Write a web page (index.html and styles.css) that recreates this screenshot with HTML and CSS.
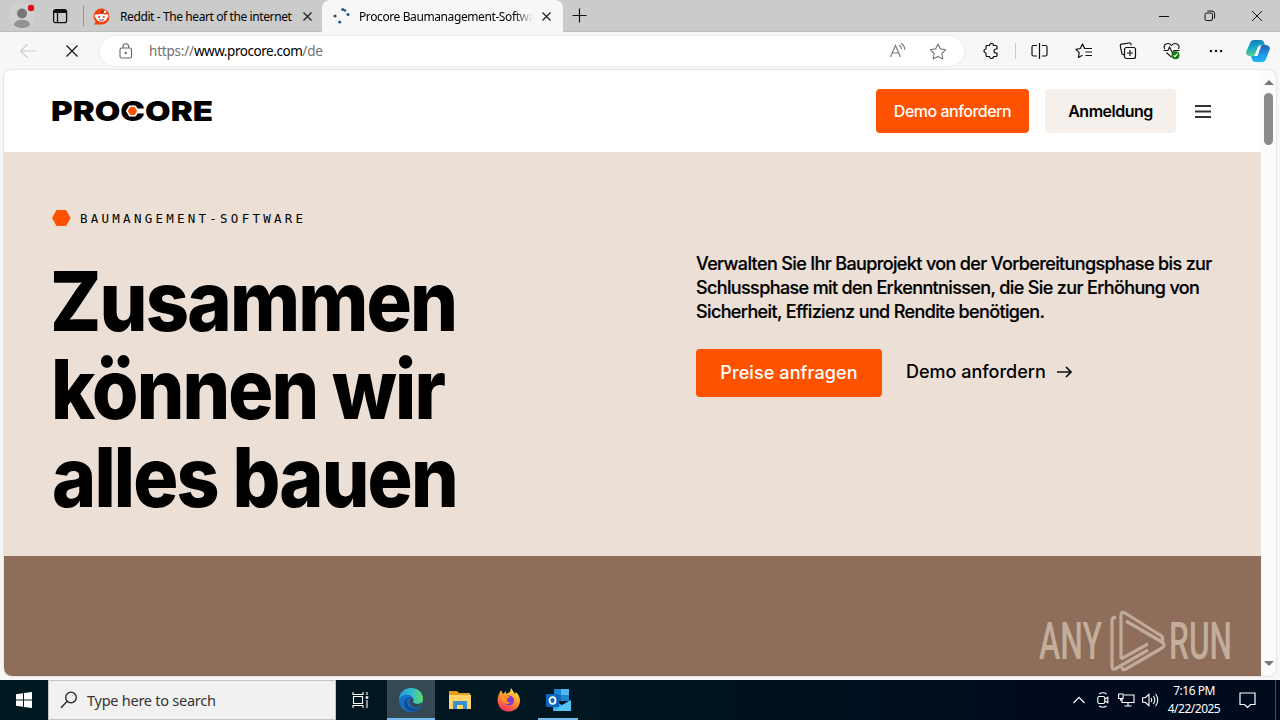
FILE: index.html
```html
<!DOCTYPE html>
<html lang="de">
<head>
<meta charset="utf-8">
<title>Procore Baumanagement-Software</title>
<link rel="stylesheet" href="styles.css">
</head>
<body>
<div class="desktop">
  <header class="tabbar">
    <svg class="profile" width="28" height="28" viewBox="0 0 28 28"><circle cx="14" cy="14" r="13" fill="#d0d0d0"/><circle cx="14" cy="11.5" r="5" fill="#777"/><path d="M6 23c0-7 16-7 16 0-3 4-13 4-16 0z" fill="#929292"/><circle cx="23" cy="6" r="3.2" fill="#e00b1c"/></svg>
    <svg class="workspaces" width="16" height="16" viewBox="0 0 16 16" fill="none" stroke="#111" stroke-width="1.3"><rect x="1.6" y="1.6" width="13" height="13" rx="2.2"/><path d="M5.5 5v9.5"/><path d="M1.8 3.5h12.6" stroke-width="3"/></svg>
    <i class="sep"></i>
    <div class="tab tab-idle">
      <svg width="17" height="17" viewBox="0 0 17 17"><path d="M8.5.5a8 8 0 1 1 0 16H.8l2-2.5A8 8 0 0 1 8.5.5z" fill="#f4420f"/><circle cx="3.3" cy="8" r="1.8" fill="#fff"/><circle cx="13.7" cy="8" r="1.8" fill="#fff"/><ellipse cx="8.5" cy="9.7" rx="5.5" ry="4" fill="#fff"/><circle cx="6.2" cy="9" r="1.1" fill="#f4420f"/><circle cx="10.8" cy="9" r="1.1" fill="#f4420f"/><path d="M6 11.6q2.5 1.5 5 0M8.5 6l.8-3 2.5.6" stroke="#222" fill="none" stroke-width=".8"/><circle cx="12" cy="3.8" r="1.2" fill="#fff"/></svg>
      <span class="tab-title t-reddit">Reddit - The heart of the internet</span>
      <svg class="x1" width="9" height="9" viewBox="0 0 9 9" stroke="#222" stroke-width="1.3"><path d="M.5.5l8 8M8.5.5l-8 8"/></svg>
    </div>
    <div class="tab tab-active">
      <svg width="18" height="18" viewBox="0 0 18 18" fill="#245b87"><circle cx="9.8" cy="2.5" r="1.6"/><circle cx="12" cy="3.5" r="1.3"/><circle cx="15" cy="7.5" r="1.6"/><circle cx="2" cy="9" r="1.6"/><circle cx="6.7" cy="15" r="1.6"/></svg>
      <span class="tab-title t-procore">Procore Baumanagement-Softwa</span>
      <svg class="x2" width="9" height="9" viewBox="0 0 9 9" stroke="#222" stroke-width="1.3"><path d="M.5.5l8 8M8.5.5l-8 8"/></svg>
    </div>
    <svg class="newtab" width="15" height="15" viewBox="0 0 15 15" stroke="#111" stroke-width="1.2"><path d="M7.5.5v14M.5 7.5h14"/></svg>
    <div class="winbtns">
      <svg width="10" height="12" viewBox="0 0 10 12"><path d="M0 6.5h10" stroke="#111"/></svg>
      <svg width="12" height="12" viewBox="0 0 12 12" fill="none" stroke="#111"><rect x="1" y="3" width="7.5" height="7.5" rx="1.5"/><path d="M3.3 1h4.7a2.6 2.6 0 0 1 2.6 2.6v5"/></svg>
      <svg width="12" height="12" viewBox="0 0 12 12" stroke="#111"><path d="M1 1l10 10M11 1l-10 10"/></svg>
    </div>
  </header>
  <div class="toolbar">
    <svg class="back" width="18" height="16" viewBox="0 0 18 16" fill="none" stroke="#cdcdcd" stroke-width="1.2"><path d="M17 8H1.5M8.5 1.2L1.5 8l7 6.8"/></svg>
    <svg class="stop" width="12" height="12" viewBox="0 0 12 12" stroke="#111" stroke-width="1.2"><path d="M.5.5l11 11M11.5.5l-11 11"/></svg>
    <div class="address">
      <svg width="14" height="16" viewBox="0 0 14 16" fill="none" stroke="#666" stroke-width="1.1"><rect x="1" y="5" width="11.5" height="10" rx="1.8"/><path d="M4 5V3.5a2.8 2.8 0 0 1 5.6 0V5"/><circle cx="6.8" cy="10" r=".6" fill="#666"/></svg>
      <div class="url"><span class="u1">https://</span><span class="host">www.procore.com</span><span class="u3">/de</span></div>
      <svg class="read" width="18" height="16" viewBox="0 0 18 16" fill="none" stroke="#777" stroke-width="1.1"><path d="M1.5 14L6.5 2.5l5 11.5M3.3 10h6.4M10 2.2q2.5 1.2 2.6 4M11.8.6q4 1.6 3.9 6.2"/></svg>
      <svg class="fav" width="18" height="17" viewBox="0 0 18 17" fill="none" stroke="#777" stroke-width="1.1" stroke-linejoin="round"><path d="M9 1l2.400 4.900 5.400.8-3.900 3.800.9 5.400L9 13.400l-4.800 2.500.9-5.400L1.200 6.700l5.400-.8z"/></svg>
    </div>
    <div class="tools">
      <svg width="16" height="16" viewBox="0 0 16 16" fill="none" stroke="#111" stroke-width="1.2" stroke-linejoin="round"><path d="M4 2.500h2.500a2 2 0 0 1 4 0h2.500q1 0 1 1V6h-1a2 2 0 0 0 0 4h1v2.500q0 1-1 1h-2.500a2 2 0 0 1-4 0H4q-1 0-1-1V10a2 2 0 0 1 0-4V3.500q0-1 1-1z"/></svg>
      <i class="tool-sep"></i>
      <svg class="split" width="18" height="16" viewBox="0 0 18 16" fill="none" stroke="#111" stroke-width="1.2"><path d="M6 2.500H2.500A1.500 1.500 0 0 0 1 4v7.500A1.500 1.500 0 0 0 2.500 13H6M11 2.500h3.500A1.500 1.500 0 0 1 16 4v7.500a1.500 1.500 0 0 1-1.500 1.500H11M8.500 0v16"/></svg>
      <svg class="favs" width="18" height="16" viewBox="0 0 18 16" fill="none" stroke="#111" stroke-width="1.2" stroke-linejoin="round"><path d="M10.500 5.500h-.8L7.500 1 5.300 5.500.9 6.300l3.300 3.300-.8 4.900 4.100-2.200M10.500 5.500H17M10.500 9H17M10.500 12.500H17"/></svg>
      <svg class="coll" width="18" height="18" viewBox="0 0 18 18" fill="none" stroke="#111" stroke-width="1.2"><rect x="5.500" y="5.500" width="11" height="11" rx="2"/><path d="M11 8v6M8 11h6M5.500 13L3 12 1.300 4Q1 2.500 2.500 2.200L10 1q1.700-.3 2 1.400l.4 1"/></svg>
      <svg class="heart" width="18" height="18" viewBox="0 0 18 18" fill="none" stroke="#111" stroke-width="1.1"><path d="M1.800 7C-.5 2.500 5-.5 8.500 3.500 12-.5 17.500 2.500 15.500 7M.5 8.500H5L6.500 5l3 6L11 8.500h5.500M3.500 10.500l5 4.800"/><circle cx="12.500" cy="13.200" r="4" fill="#107c10" stroke="none"/><path d="M10.700 13.300l1.300 1.400 2.500-3" stroke="#fff"/></svg>
      <svg class="dots" width="14" height="4" viewBox="0 0 14 4" fill="#111"><circle cx="2" cy="2" r="1.200"/><circle cx="7" cy="2" r="1.200"/><circle cx="12" cy="2" r="1.200"/></svg>
      <svg class="copilot" width="24" height="24" viewBox="0 0 24 24"><defs><linearGradient id="ca" x2=".2" y2="1"><stop offset="0" stop-color="#1474bd"/><stop offset=".5" stop-color="#16a5c8"/><stop offset="1" stop-color="#58cf91"/></linearGradient><linearGradient id="cb" x2="0" y2="1"><stop stop-color="#245fae"/><stop offset=".5" stop-color="#1c92e8"/><stop offset="1" stop-color="#20b8f5"/></linearGradient></defs><path d="M8 1h7q2 0 2.800 2L19 6h-4q-2 0-3 3l-2 6q-1 2-3 2H3q-4-1-2.500-5L4 4q1-3 4-3z" fill="url(#ca)"/><path d="M16 23H9q-2 0-2.800-2L5 17h4q2 0 3-3l2-6q1-2 3-2h3q5 1 3.500 5L20 20q-1 3-4 3z" fill="url(#cb)"/><path d="M12 7.500h3l-3.500 9.500H8.500z" fill="#fff"/></svg>
    </div>
  </div>
  <div class="viewport">
    <main class="page">
      <nav class="nav">
        <svg class="logo" width="162" height="22" viewBox="0 0 162 22"><text x="-1" y="20.500" textLength="162" lengthAdjust="spacingAndGlyphs">PROCORE</text><path d="M74.800 11l2.800-4.700h5.600l2.800 4.700-2.800 4.700h-5.600z" fill="#ff5200" stroke="#fff" stroke-width="1.500"/></svg>
        <a class="btn demo"><span>Demo anfordern</span></a>
        <a class="btn login"><span>Anmeldung</span></a>
        <svg class="burger" width="16" height="13" viewBox="0 0 16 13" stroke="#333" stroke-width="2"><path d="M0 1h16M0 6.500h16M0 12h16"/></svg>
      </nav>
      <section class="hero">
        <div class="left">
          <div class="eyebrow"><svg width="19" height="16" viewBox="0 0 19 16"><path d="M0 8L4.500 0h9.500l4.700 8-4.700 8H4.500z" fill="#ff5200"/></svg><span>BAUMANGEMENT-SOFTWARE</span></div>
          <h1><span class="l1">Zusammen</span><span class="l2">können wir</span><span class="l3">alles bauen</span></h1>
        </div>
        <div class="right">
          <p><span class="p1">Verwalten Sie Ihr Bauprojekt von der Vorbereitungsphase bis zur</span><span class="p2">Schlussphase mit den Erkenntnissen, die Sie zur Erhöhung von</span><span class="p3">Sicherheit, Effizienz und Rendite benötigen.</span></p>
          <div class="cta"><a class="price"><span>Preise anfragen</span></a><a class="link"><span>Demo anfordern</span><svg width="15" height="12" viewBox="0 0 15 12" fill="none" stroke="#111" stroke-width="1.700"><path d="M0 6h13.500M9 1l5 5-5 5"/></svg></a></div>
        </div>
      </section>
      <section class="band">
        <svg class="mark" width="196" height="66" viewBox="0 0 196 66" fill="none"><g class="marktext"><text x="4" y="51" textLength="63" lengthAdjust="spacingAndGlyphs">ANY</text><text x="134" y="51" textLength="63" lengthAdjust="spacingAndGlyphs">RUN</text></g><g stroke="#cdb9a8" stroke-opacity=".8" stroke-width="3.200" stroke-linejoin="round"><path d="M81 10q-4-2-4 3v46q0 3 3 2l33-19"/><path d="M86 51V7q0-4 4-2l35 22q4 2 2 7l-36-21"/><path d="M86 51l27-15M127 34q4 3 0 6L91 61q-4 2-4-2"/></g></svg>
      </section>
    </main>
    <aside class="scroll"><i class="up"></i><i class="thumb"></i><i class="down"></i></aside>
  </div>
  <footer class="taskbar">
    <div class="start"><svg width="16" height="16" viewBox="0 0 16 16" fill="#fff"><path d="M0 2.300l7-1v6.200H0zM8 1.100L16 0v7.500H8zM0 8.500h7v6.200l-7-1zM8 8.500h8V16l-8-1.100z"/></svg></div>
    <div class="search"><svg width="18" height="18" viewBox="0 0 18 18" fill="none" stroke="#222" stroke-width="1.300"><circle cx="11" cy="6.500" r="5.300"/><path d="M7.200 10.300L1 16.800"/></svg><span>Type here to search</span></div>
    <div class="app"><svg width="17" height="16" viewBox="0 0 17 16" fill="none" stroke="#fff" stroke-width="1.100"><path d="M1 0v2.500h10V0M1 16v-2.500h10V16M1.500 4.500h9v7h-9zM15 0v3M15 8v8"/><path d="M13.700 4.300h2.600v2.400h-2.600z" fill="#fff" stroke="none"/></svg></div>
    <div class="app active"><svg width="24" height="24" viewBox="0 0 24 24"><defs><linearGradient id="ea"><stop stop-color="#2498df"/><stop offset=".55" stop-color="#31bfc8"/><stop offset="1" stop-color="#64d760"/></linearGradient></defs><circle cx="12" cy="12" r="12" fill="#1270c5"/><path d="M0 11C1-4 24-3 24 11c0 5-5 6-9 4-2-1 0-2-.5-4C13 6 5 5 0 11z" fill="url(#ea)"/><path d="M8 12c-1 7 6 11 13 7-4 7-15 5-16-3 0-4 3-7 7-6-2 0-3 1-4 2z" fill="#124a93"/><path d="M14 11c1 2-1 3 .5 4 3 1.500 6 1 8.500-.5l-1.500 4c-6 3-12-1-11-6 .5-2 2.500-3 3.500-1.500z" fill="#344953"/></svg></div>
    <div class="app"><svg width="22" height="18" viewBox="0 0 22 18"><path d="M0 0h8l2 2h11v6H0z" fill="#e69b1b"/><path d="M0 4h22v14H0z" fill="#ffd567"/><path d="M4 10h14v8h-4v-4H8v4H4z" fill="#3590d0"/></svg></div>
    <div class="app"><svg width="24" height="24" viewBox="0 0 24 24"><defs><linearGradient id="fa" x1=".8" x2=".3" y2="1"><stop stop-color="#fff044"/><stop offset=".5" stop-color="#ff9329"/><stop offset="1" stop-color="#f62b65"/></linearGradient></defs><path d="M2 6l2-4 2 4 3-3v3l4-2 1-4 4 6 1-2c4 4 5 9 3 13-3 8-16 9-20 1C0 14 0 10 2 6z" fill="url(#fa)"/><circle cx="12" cy="12.500" r="5" fill="#7a3bd0"/><path d="M5 8q5-2 8 1l-3 2q-1 4 4 3-4 4-8 0-2-3-1-6z" fill="#ff912b"/></svg></div>
    <div class="app open"><svg width="25" height="22" viewBox="0 0 25 22"><path d="M8 0h15v12H8z" fill="#2185d2"/><path d="M15 0h8v6h-8z" fill="#52b7ef"/><path d="M8 6h7v6H8z" fill="#1565b3"/><path d="M7 11l9 5 9-5v11H7z" fill="#31a9eb"/><path d="M7 22l18-11v11z" fill="#52c3f4"/><rect y="5" width="13" height="13" rx="1" fill="#0c66bd"/><ellipse cx="6.500" cy="11.500" rx="3" ry="3.300" fill="none" stroke="#fff" stroke-width="1.800"/></svg></div>
    <div class="tray">
      <svg class="chev" width="12" height="8" viewBox="0 0 12 8" fill="none" stroke="#fff" stroke-width="1.200"><path d="M.5 7L6 1.300 11.500 7"/></svg>
      <svg class="meet" width="12" height="16" viewBox="0 0 12 16" fill="none" stroke="#fff" stroke-width="1.100"><rect x=".8" y="4.500" width="7" height="7" rx="1.500"/><path d="M8 7l2.800-1.700v5.400L8 9M2 2q4-2.500 7.500 0M2 14q4 2.500 7.500 0"/></svg>
      <svg class="net" width="17" height="14" viewBox="0 0 17 14" fill="none" stroke="#fff" stroke-width="1.100"><path d="M6 2h10v7.500H4V6M10 9.500V13M6.500 13h7M.6 1h4.500v4.500H.6zM2.800 5.500V8"/></svg>
      <svg class="vol" width="17" height="14" viewBox="0 0 17 14" fill="none" stroke="#fff" stroke-width="1.100"><path d="M.6 4.700h2.700L7 1.300v11.400L3.300 9.300H.6zM9 5q1.500 2 0 4M11.300 3q3 4 0 8M13.600 1q4.300 6 0 12"/></svg>
      <div class="clock"><span class="time">7:16 PM</span><span class="date">4/22/2025</span></div>
      <svg class="note" width="17" height="17" viewBox="0 0 17 17" fill="none" stroke="#fff" stroke-width="1.200"><path d="M1 1h15v11.500h-4.500L8.500 15.500l-3-3H1z"/></svg>
      <i class="peek"></i>
    </div>
  </footer>
</div>
</body>
</html>
```
FILE: styles.css
```css
* { box-sizing: border-box; }
body { margin: 0; overflow: hidden; font-family: "Noto Sans", sans-serif; color: #111; }
svg { display: block; flex: none; }
.desktop { width: 1280px; height: 720px; display: flex; flex-direction: column; background: #f7f7f7; }
span { white-space: nowrap; }
.tabbar { height: 32px; flex: none; display: flex; align-items: center; background: #cbcbcb; border-bottom: 1px solid #bdbdbd; }
.profile { margin-left: 8px; }
.workspaces { margin-left: 16px; }
.sep { width: 1px; height: 20px; background: #929292; margin-left: 15px; }
.tab { height: 32px; display: flex; align-items: center; align-self: flex-start; }
.tab-idle { width: 238px; padding-left: 9px; }
.tab-active { width: 241px; padding-left: 11px; background: #f7f7f7; border-radius: 8px 8px 0 0; }
.tab-title { font-size: 12px; color: #000; }
.t-reddit { width: 176px; margin-left: 10px; letter-spacing: -.4px; }
.t-procore { width: 174px; margin-left: 8px; letter-spacing: -.4px; -webkit-mask-image: linear-gradient(90deg, #000 155px, transparent 174px); mask-image: linear-gradient(90deg, #000 155px, transparent 174px); }
.x1 { margin-left: 7px; }
.x2 { margin-left: 9px; }
.newtab { margin-left: 9px; }
.winbtns { margin-left: auto; display: flex; gap: 35px; padding-right: 17px; }
.toolbar { height: 38px; flex: none; display: flex; align-items: center; }
.back { margin-left: 19px; }
.stop { margin-left: 29px; }
.address { width: 864px; height: 30px; margin-left: 22px; background: #fff; border-radius: 15px; display: flex; align-items: center; padding-left: 19px; box-shadow: 0 0 2px #ddd; }
.url { display: flex; width: 200px; margin-left: 16px; font-size: 13.5px; color: #707070; }
.u1, .u3 { letter-spacing: -.2px; }
.host { color: #000; letter-spacing: -.45px; }
.read { margin-left: 540px; }
.fav { margin-left: 22px; }
.tools { display: flex; align-items: center; padding-left: 19px; }
.tool-sep { width: 1px; height: 16px; background: #ccc; margin-left: 16px; }
.split { margin-left: 15px; }
.favs { margin-left: 26px; }
.coll { margin-left: 26px; }
.heart { margin-left: 26px; }
.dots { margin-left: 28px; }
.copilot { margin-left: 23px; }
.viewport { height: 606px; flex: none; margin: 0 4px; display: flex; border-radius: 8px; overflow: hidden; background: #fcfcfc; box-shadow: 0 0 2px #bbb; }
.page { width: 1257px; flex: none; background: #fff; font-family: Inter, sans-serif; }
.nav { height: 82px; display: flex; align-items: center; padding: 0 50px 0 48px; }
.logo { overflow: visible; }
.logo text { font-family: Inter, sans-serif; font-weight: 900; font-size: 27.5px; fill: #000; }
.btn { height: 44px; border-radius: 4px; display: flex; align-items: center; justify-content: center; font-size: 16px; font-weight: 500; }
.demo { width: 153px; margin-left: auto; background: #ff5200; color: #fff; letter-spacing: -.5px; }
.login { width: 131px; margin-left: 16px; background: #f5f0ec; font-weight: 600; color: #000; letter-spacing: -.5px; }
.burger { margin-left: 19px; }
.hero { height: 404px; background: #ebdfd6; display: flex; padding-left: 48px; }
.left { width: 644px; padding-top: 58px; }
.eyebrow { height: 16px; display: flex; align-items: center; gap: 9px; font-family: "DejaVu Sans Mono", monospace; font-size: 12.5px; letter-spacing: 3.25px; color: #000; }
h1 { margin: 31px 0 0; font-size: 83px; line-height: 88px; font-weight: 800; color: #000; }
h1 span, p span { display: block; width: max-content; transform-origin: left; }
h1 span { letter-spacing: -2px; }
.l1 { transform: translateX(-2px) scaleX(.911); }
.l2 { transform: translateX(-1px) scaleX(.904); }
.l3 { transform: scaleX(.905); }
.right { padding-top: 100px; }
p { margin: 0; font-size: 18px; line-height: 24px; font-weight: 500; color: #000; }
p span { letter-spacing: -.63px; -webkit-text-stroke: .2px #000; }
.cta { margin-top: 25px; display: flex; }
.price { width: 186px; height: 48px; border-radius: 4px; background: #ff5200; color: #fff; display: flex; align-items: center; justify-content: center; font-size: 18px; font-weight: 500; letter-spacing: .1px; padding-bottom: 1px; }
.link { height: 46px; margin-left: 24px; display: flex; align-items: center; gap: 11px; font-size: 18px; font-weight: 500; color: #000; }
.link span { padding-bottom: 1px; }
.band { height: 120px; background: #8e6e5b; display: flex; justify-content: flex-end; padding: 52px 30px 0 0; }
.mark { overflow: visible; }
.marktext text { font-family: Roboto, sans-serif; font-size: 51px; font-weight: 500; fill: #cdb9a8; fill-opacity: .85; }
.scroll { width: 15px; display: flex; flex-direction: column; align-items: center; }
.up { margin-top: 10px; border: 5px solid transparent; border-top: 0; border-bottom: 5px solid #777; }
.thumb { width: 9px; height: 52px; margin-top: 8px; border-radius: 5px; background: #8b8b8b; }
.down { margin-top: auto; margin-bottom: 10px; border: 5px solid transparent; border-bottom: 0; border-top: 5px solid #777; }
.taskbar { height: 40px; flex: none; margin-top: 4px; display: flex; background: linear-gradient(90deg, #001820, #001621 45%, #000c1e 80%, #000b1d); }
.start { width: 48px; display: flex; align-items: center; justify-content: center; }
.search { width: 288px; background: #f1f1f1; border: 1px solid #c4c4c4; display: flex; align-items: center; padding-left: 11px; font-size: 14.5px; color: #333; }
.search span { margin-left: 9px; letter-spacing: -.25px; }
.app { width: 48px; margin-right: 1px; display: flex; align-items: center; justify-content: center; }
.active { background: #344953; margin-left: 2px; box-shadow: inset 0 -2px #76b9ed; }
.open { width: 40px; margin-left: 4px; box-shadow: inset 0 -2px #76b9ed; }
.tray { margin-left: auto; display: flex; align-items: center; color: #fff; }
.meet { margin-left: 12px; }
.net { margin-left: 9px; }
.vol { margin-left: 7px; }
.clock { width: 60px; margin-left: 5px; display: flex; flex-direction: column; align-items: center; font-size: 12px; line-height: 18px; padding-bottom: 1px; }
.time { letter-spacing: -.5px; }
.date { letter-spacing: -.5px; }
.note { margin-left: 15px; }
.peek { width: 1px; height: 40px; background: #46505c; margin-left: 19px; margin-right: 4px; }
```
